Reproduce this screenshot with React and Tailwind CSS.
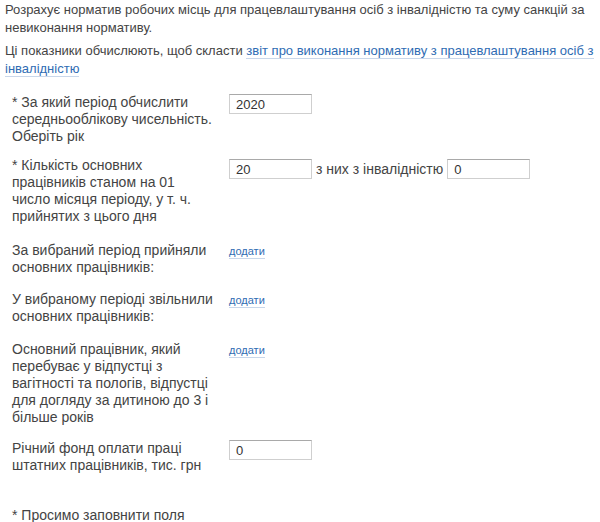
import React from 'react';

const linkCls = "text-[#2f6cb3] border-b border-[#c9d7ea] no-underline";

function Field({ value, className = "" }) {
  return (
    <input
      type="text"
      defaultValue={value}
      className={`h-[20px] w-[83px] border border-[#cfcfcf] border-t-[#a9a9a9] bg-white px-[6px] text-[13px] text-[#333] outline-none font-['Liberation_Sans',Arial,sans-serif] ${className}`}
    />
  );
}

function Row({ label, children, className = "" }) {
  return (
    <div className={`flex ${className}`}>
      <div className="w-[229px] shrink-0 pl-[12px] pr-[13px]">{label}</div>
      <div className="flex items-start">{children}</div>
    </div>
  );
}

function AddLink() {
  return (
    <a href="#" className={`${linkCls} mt-[3px] text-[11px] leading-[13px]`} onClick={e => e.preventDefault()}>додати</a>
  );
}

export default function App() {
  return (
    <div className="w-[600px] h-[522px] bg-white overflow-hidden text-[14px] text-[#444] font-['Liberation_Sans',Arial,sans-serif]">
      <div className="px-[5px] pt-[1px] text-[13px] leading-[18px]">
        <div>Розрахує норматив робочих місць для працевлаштування осіб з інвалідністю та суму санкцій за невиконання нормативу.</div>
        <div className="mt-[5px]">
          Ці показники обчислюють, щоб скласти{' '}
          <a href="#" className={linkCls} onClick={e => e.preventDefault()}>звіт про виконання нормативу з працевлаштування осіб з інвалідністю</a>
        </div>
      </div>

      <div className="mt-[16px] leading-[17px]">
        <Row label="* За який період обчислити середньооблікову чисельність. Оберіть рік">
          <Field value="2020" />
        </Row>

        <Row className="mt-[12px]" label="* Кількість основних працівників станом на 01 число місяця періоду, у т. ч. прийнятих з цього дня">
          <div className="flex items-center mt-[2px]">
            <Field value="20" />
            <span className="mx-[4px]">з них з інвалідністю</span>
            <Field value="0" />
          </div>
        </Row>

        <Row className="mt-[17px]" label="За вибраний період прийняли основних працівників:">
          <AddLink />
        </Row>

        <Row className="mt-[15px]" label="У вибраному періоді звільнили основних працівників:">
          <AddLink />
        </Row>

        <Row className="mt-[16px]" label="Основний працівник, який перебуває у відпустці з вагітності та пологів, відпустці для догляду за дитиною до 3 і більше років">
          <AddLink />
        </Row>

        <Row className="mt-[14px]" label="Річний фонд оплати праці штатних працівників, тис. грн">
          <Field value="0" />
        </Row>

        <div className="mt-[33px] pl-[12px]">* Просимо заповнити поля</div>
      </div>
    </div>
  );
}
